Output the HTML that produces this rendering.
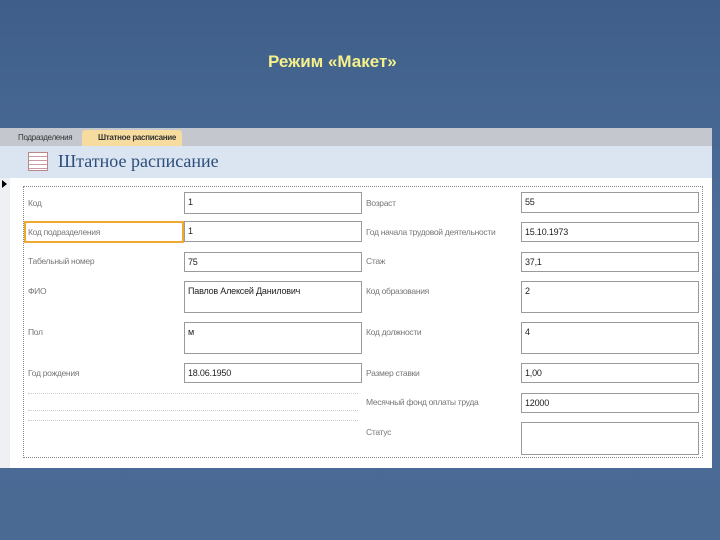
<!DOCTYPE html>
<html><head><meta charset="utf-8"><style>
*{margin:0;padding:0;box-sizing:border-box}
body{width:720px;height:540px;overflow:hidden;background:#4a6b95;background-image:linear-gradient(180deg,#3f5f8a 0%,#4c6d98 40%,#4a6a94 100%);font-family:"Liberation Sans","DejaVu Sans",sans-serif;position:relative}
.t{position:absolute;left:268px;top:52px;color:#f4f08a;font-weight:bold;font-size:17px;white-space:nowrap}
.p{position:absolute;left:0;top:128px;width:712px;height:340px;background:#fff}
.tabs{position:absolute;left:0;top:0;width:712px;height:18px;background:#c4c8ce}
.tab{position:absolute;top:2px;height:16px;font-size:8px;line-height:15px;padding-left:16px;white-space:nowrap;overflow:hidden;letter-spacing:-0.3px}
.h{position:absolute;left:0;top:18px;width:712px;height:32px;background:#dbe5f1}
.h span{position:absolute;left:58px;top:5px;font-family:"Liberation Serif",serif;font-size:18px;color:#2c4d7a;white-space:nowrap}
.strip{position:absolute;left:0;top:50px;width:10px;height:290px;background:#eef0f4}
.dot{position:absolute;left:23px;top:58px;width:680px;height:272px;border:1px dotted #888}
.l{position:absolute;font-size:8.5px;color:#777;white-space:nowrap;letter-spacing:-0.3px}
.b{position:absolute;border:1px solid #9a9a9a;font-size:9px;color:#222;padding:4px 0 0 3px;white-space:nowrap;letter-spacing:-0.2px}
.g{position:absolute;left:28px;width:330px;border-top:1px dotted #ccc}
</style></head><body>
<div class="t">Режим «Макет»</div>
<div class="p">
<div class="tabs">
<div class="tab" style="left:2px;width:78px;color:#333">Подразделения</div>
<div class="tab" style="left:82px;width:100px;background:#f7dca0;font-weight:bold;color:#333;border-radius:3px 3px 0 0">Штатное расписание</div>
</div>
<div class="h"><div style="position:absolute;left:28px;top:6px;width:20px;height:19px;border:1px solid #b88;background:repeating-linear-gradient(#fff 0 3px,#c9a 3px 4px)"></div><span>Штатное расписание</span></div>
<div class="strip"></div>
<div style="position:absolute;left:2px;top:52px;border-left:5px solid #000;border-top:4px solid transparent;border-bottom:4px solid transparent"></div>
<div class="dot"></div>
<div class="g" style="top:265px"></div><div class="g" style="top:282px"></div><div class="g" style="top:292px"></div>
<div style="position:absolute;left:24px;top:93px;width:160px;height:22px;border:2px solid #f0a830"></div>
<div class="l" style="left:28px;top:70px">Код</div><div class="b" style="left:184px;top:64px;width:178px;height:22px">1</div>
<div class="l" style="left:28px;top:99px">Код подразделения</div><div class="b" style="left:184px;top:93px;width:178px;height:21px">1</div>
<div class="l" style="left:28px;top:128px">Табельный номер</div><div class="b" style="left:184px;top:124px;width:178px;height:20px">75</div>
<div class="l" style="left:28px;top:158px">ФИО</div><div class="b" style="left:184px;top:153px;width:178px;height:32px">Павлов Алексей Данилович</div>
<div class="l" style="left:28px;top:199px">Пол</div><div class="b" style="left:184px;top:194px;width:178px;height:32px">м</div>
<div class="l" style="left:28px;top:240px">Год рождения</div><div class="b" style="left:184px;top:235px;width:178px;height:20px">18.06.1950</div>
<div class="l" style="left:366px;top:70px">Возраст</div><div class="b" style="left:521px;top:64px;width:178px;height:21px">55</div>
<div class="l" style="left:366px;top:99px">Год начала трудовой деятельности</div><div class="b" style="left:521px;top:94px;width:178px;height:20px">15.10.1973</div>
<div class="l" style="left:366px;top:128px">Стаж</div><div class="b" style="left:521px;top:124px;width:178px;height:20px">37,1</div>
<div class="l" style="left:366px;top:158px">Код образования</div><div class="b" style="left:521px;top:153px;width:178px;height:32px">2</div>
<div class="l" style="left:366px;top:199px">Код должности</div><div class="b" style="left:521px;top:194px;width:178px;height:32px">4</div>
<div class="l" style="left:366px;top:240px">Размер ставки</div><div class="b" style="left:521px;top:235px;width:178px;height:20px">1,00</div>
<div class="l" style="left:366px;top:269px">Месячный фонд оплаты труда</div><div class="b" style="left:521px;top:265px;width:178px;height:20px">12000</div>
<div class="l" style="left:366px;top:299px">Статус</div><div class="b" style="left:521px;top:294px;width:178px;height:33px"></div>
</div>
</body></html>
